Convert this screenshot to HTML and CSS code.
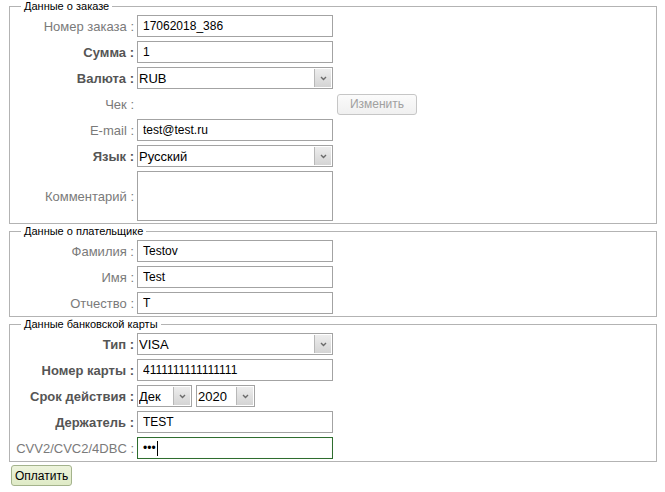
FILE: index.html
```html
<!DOCTYPE html>
<html lang="ru">
<head>
  <meta charset="UTF-8" />
  <meta name="viewport" content="width=device-width, initial-scale=1.0"/>
  <title>Оплата заказа</title>
  <link rel="stylesheet" href="styles.css">
</head>
<body>

  <form class="payform" onsubmit="return false">

    <fieldset>
      <legend>Данные о заказе</legend>
      <div class="row">
        <label>Номер заказа :</label>
        <input type="text" value="17062018_386" />
      </div>
      <div class="row">
        <label class="req">Сумма :</label>
        <input type="text" value="1" />
      </div>
      <div class="row">
        <label class="req">Валюта :</label>
        <div class="select">
          <select><option>RUB</option></select>
          <span class="arrow"><svg width="7" height="5" viewBox="0 0 7 5"><path d="M1 1l2.5 2.5L6 1" fill="none" stroke="#6b6b6b" stroke-width="1.4"/></svg></span>
        </div>
      </div>
      <div class="row">
        <label>Чек :</label>
        <span class="blank"></span>
        <button class="btn-change" disabled>Изменить</button>
      </div>
      <div class="row">
        <label>E-mail :</label>
        <input type="text" value="test@test.ru" />
      </div>
      <div class="row">
        <label class="req">Язык :</label>
        <div class="select">
          <select><option>Русский</option></select>
          <span class="arrow"><svg width="7" height="5" viewBox="0 0 7 5"><path d="M1 1l2.5 2.5L6 1" fill="none" stroke="#6b6b6b" stroke-width="1.4"/></svg></span>
        </div>
      </div>
      <div class="row tall">
        <label>Комментарий :</label>
        <textarea></textarea>
      </div>
    </fieldset>

    <fieldset>
      <legend>Данные о плательщике</legend>
      <div class="row">
        <label>Фамилия :</label>
        <input type="text" value="Testov" />
      </div>
      <div class="row">
        <label>Имя :</label>
        <input type="text" value="Test" />
      </div>
      <div class="row">
        <label>Отчество :</label>
        <input type="text" value="T" />
      </div>
    </fieldset>

    <fieldset>
      <legend>Данные банковской карты</legend>
      <div class="row">
        <label class="req">Тип :</label>
        <div class="select">
          <select><option>VISA</option></select>
          <span class="arrow"><svg width="7" height="5" viewBox="0 0 7 5"><path d="M1 1l2.5 2.5L6 1" fill="none" stroke="#6b6b6b" stroke-width="1.4"/></svg></span>
        </div>
      </div>
      <div class="row">
        <label class="req">Номер карты :</label>
        <input type="text" value="4111111111111111" />
      </div>
      <div class="row">
        <label class="req">Срок действия :</label>
        <div class="select month">
          <select><option>Дек</option></select>
          <span class="arrow"><svg width="7" height="5" viewBox="0 0 7 5"><path d="M1 1l2.5 2.5L6 1" fill="none" stroke="#6b6b6b" stroke-width="1.4"/></svg></span>
        </div>
        <div class="select year">
          <select><option>2020</option></select>
          <span class="arrow"><svg width="7" height="5" viewBox="0 0 7 5"><path d="M1 1l2.5 2.5L6 1" fill="none" stroke="#6b6b6b" stroke-width="1.4"/></svg></span>
        </div>
      </div>
      <div class="row">
        <label class="req">Держатель :</label>
        <input type="text" value="TEST" />
      </div>
      <div class="row">
        <label>CVV2/CVC2/4DBC :</label>
        <div class="field focused">&bull;&bull;&bull;<span class="caret"></span></div>
      </div>
    </fieldset>

    <button class="btn-pay">Оплатить</button>
  </form>

</body>
</html>
```

FILE: styles.css
```css
body {
  font-family: "Liberation Sans", Arial, sans-serif;
  font-size: 13px;
  background: #fff;
  margin: 0 8px 0 9px;
  padding: 0;
}
fieldset {
  margin: 0 0 1px 0;
  padding: 2px 0 2px 0;
  border: 1px solid #b3b3b3;
  display: flex;
  flex-direction: column;
  gap: 4px;
}
legend {
  font-size: 11px;
  line-height: 13px;
  color: #000;
  margin-left: 11px;
  padding: 0 3px;
}
.row {
  display: flex;
  align-items: center;
  height: 22px;
}
.row.tall {
  height: 50px;
}
.row label {
  width: 124px;
  flex: none;
  text-align: right;
  color: #7a7a7a;
  margin-right: 3px;
}
.row label.req {
  font-weight: bold;
  color: #555;
}
input[type="text"], textarea, .field {
  box-sizing: border-box;
  width: 196px;
  height: 22px;
  border: 1px solid #a3a3a3;
  padding: 0 5px;
  font-family: inherit;
  font-size: 12px;
  color: #000;
  background: #fff;
  margin: 0;
}
textarea {
  height: 50px;
  resize: none;
}
.field {
  display: flex;
  align-items: center;
}
.field.focused {
  border-color: #2f6d2f;
  box-shadow: inset 0 0 1px #cfe8cf;
}
.caret {
  display: inline-block;
  width: 1px;
  height: 15px;
  background: #000;
  margin-left: 1px;
}
.select {
  position: relative;
  width: 196px;
  height: 22px;
}
.select.month {
  width: 55px;
  margin-right: 4px;
}
.select.year {
  width: 59px;
}
.select select {
  appearance: none;
  -webkit-appearance: none;
  box-sizing: border-box;
  width: 100%;
  height: 100%;
  border: 1px solid #a3a3a3;
  border-radius: 0;
  background: #fff;
  padding: 0 18px 0 1px;
  margin: 0;
  font-family: inherit;
  font-size: 13px;
  color: #000;
}
.select .arrow {
  position: absolute;
  top: 2px;
  right: 2px;
  bottom: 2px;
  width: 16px;
  border-left: 1px solid #b8b8b8;
  background: linear-gradient(#ededed, #d4d4d4);
  display: flex;
  align-items: center;
  justify-content: center;
  pointer-events: none;
}
.blank {
  width: 196px;
  flex: none;
}
.btn-change {
  margin-left: 4px;
  height: 21px;
  width: 80px;
  padding: 0;
  font-family: inherit;
  font-size: 12px;
  color: #a0a0a0;
  background: linear-gradient(#fbfbfb, #f0f0f0);
  border: 1px solid #c6c6c6;
  border-radius: 3px;
}
.btn-pay {
  margin: 2px 0 0 2px;
  height: 21px;
  padding: 0 3px;
  font-family: inherit;
  font-size: 12px;
  color: #000;
  background: linear-gradient(#edf4dc, #dfeac6);
  border: 1px solid #a4b38c;
  border-radius: 3px;
  cursor: pointer;
}
```
